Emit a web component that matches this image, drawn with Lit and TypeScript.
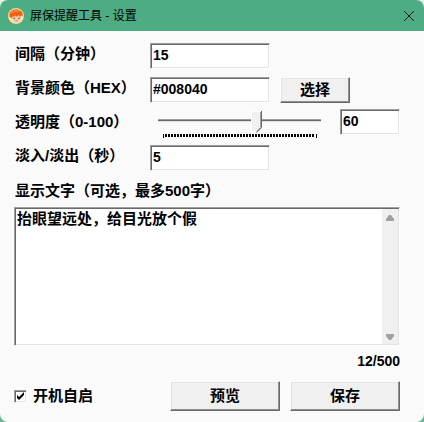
import { LitElement, html, css, svg } from "lit";
import { customElement, state } from "lit/decorators.js";

const logo = svg`
  <circle cx="8" cy="8" r="8" fill="#f0d98a"/>
  <circle cx="8" cy="8" r="7" fill="#fbeec0"/>
  <path d="M3 7.5 Q3 14 8.5 14.8 Q13.5 14 13.5 7.5 Z" fill="#f6c9a4"/>
  <path d="M1.4 8.4 Q1 3.6 5 2 Q9 .2 12.8 3 Q15.4 5.4 14.6 8.6 L13 7.6 L12 8.8 L10.6 7.2 L9 8.8 L7.4 7.4 L5.8 9 L4.6 8 L3.6 10.6 Z" fill="#ee5f1c"/>
  <path d="M3 5 Q6 2 11 3.4" stroke="#f9902f" stroke-width="1.4" fill="none"/>
  <path d="M5.4 10.3h1.8M10 10.3h1.8" stroke="#7c4a3a" stroke-width="1"/>
  <path d="M7.6 12.8h2" stroke="#cf6a55" stroke-width=".8"/>`;

@customElement("app-root")
export class AppRoot extends LitElement {
  @state() private message = "抬眼望远处，给目光放个假";

  static styles = css`
    :host {
      display: block;
      min-height: 100vh;
      background: linear-gradient(#e6ebe9 50%, #66b795 50%);
      color: #000;
      font: bold 15px/18px "Liberation Sans", "Noto Sans CJK SC", sans-serif;
    }
    * { box-sizing: border-box; }
    .window {
      display: flex;
      flex-direction: column;
      min-height: 100vh;
      border-radius: 8px;
      overflow: hidden;
      background: #fafafa;
    }
    .titlebar {
      display: flex;
      align-items: center;
      gap: 6px;
      height: 31px;
      padding: 0 10px 0 8px;
      background: #4dac84;
      font: 12px/16px "Liberation Sans", "Noto Sans CJK SC", sans-serif;
    }
    .logo { width: 16px; height: 16px; }
    .title { flex: 1; margin: 0; font: inherit; }
    .close {
      display: flex;
      padding: 0;
      border: 0;
      background: none;
    }
    .close svg { width: 10px; height: 10px; }
    .form {
      flex: 1;
      display: flex;
      flex-direction: column;
      padding: 12px 24px 11px 14px;
    }
    .row {
      display: grid;
      grid-template-columns: 136px 1fr;
      height: 26px;
      margin-bottom: 8px;
    }
    .row > label { padding: 2px 0 0 1px; white-space: nowrap; }
    .slider-row { height: 28px; margin-top: -2px; }
    .slider-row > label { padding-top: 4px; }
    .controls { display: flex; gap: 10px; }
    .sunken {
      border: 1px solid;
      border-color: #9e9e9e #fff #fff #9e9e9e;
      box-shadow: inset 1px 1px #696969, inset -1px -1px #e3e3e3;
      background: #fff;
    }
    .field {
      width: 120px;
      height: 26px;
      margin: 0;
      padding: 0 2px 3px;
      border-radius: 0;
      outline: 0;
      color: inherit;
      font: inherit;
      font-size: 14px;
    }
    .short { width: 60px; }
    .button {
      height: 30px;
      padding: 0;
      border: 1px solid;
      border-color: #fff #696969 #696969 #fff;
      border-radius: 0;
      box-shadow: inset -1px -1px #8f8f8f, inset 1px 1px #e3e3e3;
      background: #f0f0f0;
      color: inherit;
      font: inherit;
    }
    .pick { width: 70px; height: 26px; }
    .action { width: 110px; }
    .slider { flex: 1; min-width: 0; padding: 2px 9px 0 8px; }
    .range {
      appearance: none;
      display: block;
      width: 100%;
      height: 22px;
      margin: 0;
      background: none;
    }
    .range::-webkit-slider-runnable-track {
      height: 22px;
      background: linear-gradient(#a0a0a0 0 1px, #696969 1px 2px, #e3e3e3 2px 3px) 0 8px / 100% 3px no-repeat;
    }
    .range::-webkit-slider-thumb {
      appearance: none;
      width: 11px;
      height: 22px;
      background: url("data:image/svg+xml,%3Csvg xmlns='http://www.w3.org/2000/svg' width='11' height='22'%3E%3Cpath d='M0 0h11v16.5l-5.5 5.5L0 16.5z' fill='%23f0f0f0'/%3E%3Cpath d='M.5 17V.5H10' fill='none' stroke='%23fff'/%3E%3Cpath d='M9.5 1v15.5l-4 4' fill='none' stroke='%23a0a0a0'/%3E%3Cpath d='M10.5 0v16.7L5.5 21.5' fill='none' stroke='%23696969'/%3E%3C/svg%3E");
    }
    .ticks {
      height: 4px;
      margin: 1px 4px 0 5px;
      background:
        linear-gradient(#000, #000) 0 0 / 1px 4px no-repeat,
        linear-gradient(#000, #000) 100% 0 / 1px 4px no-repeat,
        repeating-linear-gradient(90deg, #000 0 2px, transparent 2px 3px) 2px 0 / calc(100% - 4px) 3px no-repeat;
    }
    .caption { margin: 3px 0 7px 1px; }
    .memo {
      flex: 1;
      display: flex;
      min-height: 139px;
      padding: 1px;
    }
    .text {
      flex: 1;
      min-width: 0;
      margin: 0;
      padding: 1px;
      border: 0;
      outline: 0;
      resize: none;
      overflow: hidden;
      background: none;
      color: inherit;
      font: inherit;
    }
    .scrollbar {
      display: flex;
      flex-direction: column;
      justify-content: space-between;
      align-items: center;
      width: 16px;
      padding: 6px 0 4px;
      background: #f0f0f0;
    }
    .arrow { width: 8px; height: 6px; fill: #a0a0a0; }
    .count { margin: 6px 0 11px; text-align: right; font-size: 14px; }
    .footer { display: flex; align-items: center; gap: 10px; }
    .autostart {
      flex: 1;
      display: flex;
      align-items: center;
      gap: 6px;
    }
    .check {
      appearance: none;
      width: 13px;
      height: 13px;
      margin: 0;
    }
    .check:checked {
      background: #fff url("data:image/svg+xml,%3Csvg xmlns='http://www.w3.org/2000/svg' width='11' height='11'%3E%3Cpath d='M2 4v3l2 2 5-5V1L4 6z'/%3E%3C/svg%3E") center no-repeat;
    }
  `;

  private edit(e: Event) {
    this.message = (e.target as HTMLTextAreaElement).value;
  }

  render() {
    return html`
      <main class="window">
        <header class="titlebar">
          <svg class="logo" viewBox="0 0 16 16">${logo}</svg>
          <h1 class="title">屏保提醒工具 - 设置</h1>
          <button class="close" aria-label="关闭">
            <svg viewBox="0 0 10 10"><path d="M0 0L10 10M10 0L0 10" stroke="#111"/></svg>
          </button>
        </header>
        <form class="form" @submit=${(e: Event) => e.preventDefault()}>
          <div class="row">
            <label for="interval">间隔（分钟）</label>
            <div class="controls"><input class="field sunken" id="interval" value="15"></div>
          </div>
          <div class="row">
            <label for="color">背景颜色（HEX）</label>
            <div class="controls">
              <input class="field sunken" id="color" value="#008040">
              <button class="button pick" type="button">选择</button>
            </div>
          </div>
          <div class="row slider-row">
            <label for="opacity">透明度（0-100）</label>
            <div class="controls">
              <div class="slider">
                <input class="range" type="range" min="0" max="100" value="61" aria-label="透明度">
                <div class="ticks"></div>
              </div>
              <input class="field short sunken" id="opacity" value="60">
            </div>
          </div>
          <div class="row">
            <label for="fade">淡入/淡出（秒）</label>
            <div class="controls"><input class="field sunken" id="fade" value="5"></div>
          </div>
          <label class="caption" for="message">显示文字（可选，最多500字）</label>
          <div class="memo sunken">
            <textarea class="text" id="message" maxlength="500" .value=${this.message} @input=${this.edit}></textarea>
            <div class="scrollbar">
              <svg class="arrow" viewBox="0 0 8 6"><path d="M3 0h2l3 4v2H0V4z"/></svg>
              <svg class="arrow" viewBox="0 0 8 6"><path d="M0 0h8v2L5 6H3L0 2z"/></svg>
            </div>
          </div>
          <div class="count">${this.message.length}/500</div>
          <div class="footer">
            <label class="autostart"><input class="check sunken" type="checkbox" checked>开机自启</label>
            <button class="button action" type="button">预览</button>
            <button class="button action" type="submit">保存</button>
          </div>
        </form>
      </main>
    `;
  }
}
